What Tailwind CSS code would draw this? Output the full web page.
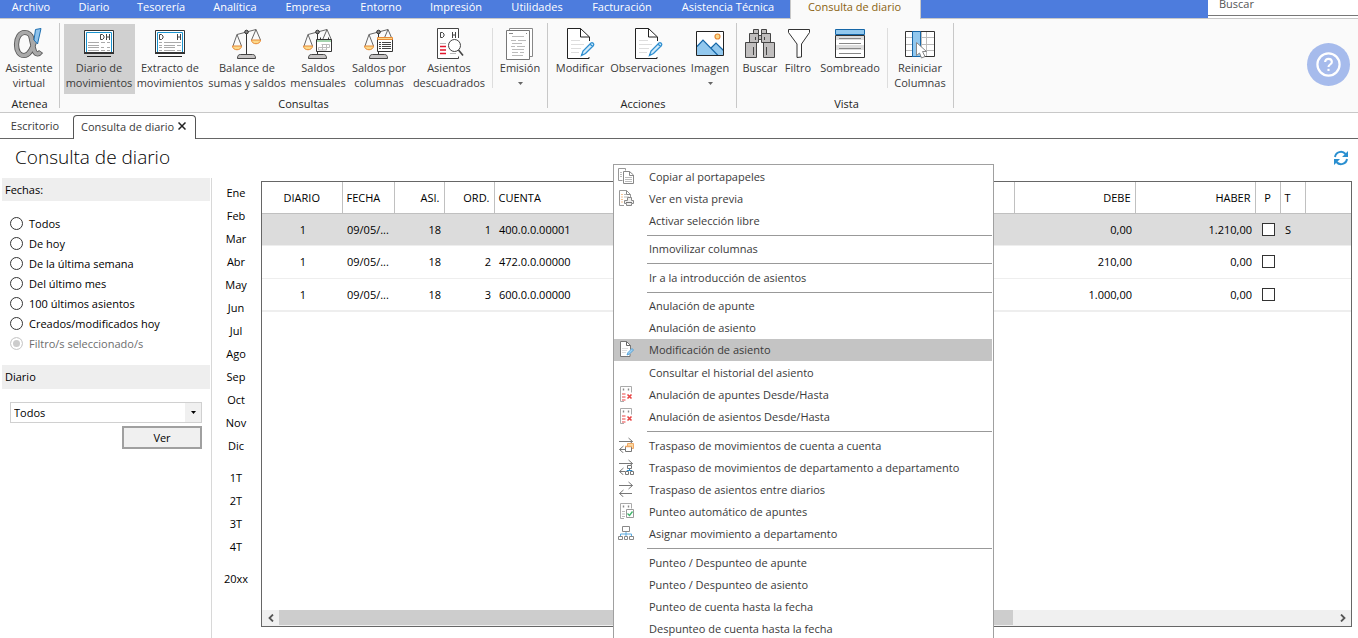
<!DOCTYPE html>
<html lang="es">
<head>
<meta charset="utf-8">
<title>Consulta de diario</title>
<script src="https://cdn.jsdelivr.net/npm/@tailwindcss/browser@4"></script>
</head>
<body class="relative flex h-screen flex-col overflow-hidden bg-white font-['Open_Sans','Noto_Sans',sans-serif] text-[11px] leading-[15px] text-[#3a3a3a]">

<svg class="hidden" aria-hidden="true">
  <symbol id="scale" viewBox="0 0 32 32">
    <path d="M15.500 5v22" stroke="#333"/>
    <path d="M6 6.500 25 1.500M6 6.500 2 18M6 6.500 10.500 18M25 1.500 20.500 12M25 1.500 29.500 12" stroke="#666" fill="none"/>
    <circle cx="15.500" cy="4" r="1.800" fill="#888" stroke="#333"/>
    <path d="M1.500 18h9c0 5-9 5-9 0z" fill="#fbd98b" stroke="#e88a35"/>
    <path d="M20.500 12h9c0 5-9 5-9 0z" fill="#fbd98b" stroke="#e88a35"/>
    <path d="M6.500 30.500c0-3 1-4 3-4h12c2 0 3 1 3 4z" fill="#c6c4c4" stroke="#444"/>
  </symbol>
  <symbol id="edit" viewBox="0 0 32 32">
    <path d="M25 29v1.500H3.500v-30h13l9 8.500v4" fill="#fff" stroke="#222"/>
    <path d="M16.500 .5v8.500h9" fill="none" stroke="#222"/>
    <path d="M7 12.500h9M7 16.500h13M7 20.500h10M7 24.500h8" stroke="#ddd"/>
    <path d="m17.500 27.500 1.500-4.500 8-8c1.500-1 3.500 1 2.500 2.500l-8 8zM26 16l2.500 2.500" fill="#d4ecfb" stroke="#2f8fd0" stroke-width="1.300"/>
  </symbol>
  <symbol id="arrows" viewBox="0 0 16 16">
    <path d="M1 4.500h13.500M10.500 1l4 3.500-4 3.500M14 12.500H1.500M5.500 9l-4 3.500 4 3.500" fill="none" stroke="#777"/>
  </symbol>
  <symbol id="delrows" viewBox="0 0 16 16">
    <path d="M6 15.500H2.500v-15h11v6" fill="#fff" stroke="#aaa"/>
    <path d="M5.500 2.500v2M10.500 2.500v2" stroke="#888" stroke-width="1.400"/>
    <path d="M4 8h3.500M4 11h3.500M4 14h3.500" stroke="#f5a0a0" stroke-width="2"/>
    <path d="m9.500 8.500 4 4M13.500 8.500l-4 4" stroke="#e84545" stroke-width="1.600"/>
  </symbol>
</svg>

<!-- Menu tabs -->
<nav class="flex h-[19px] shrink-0 border-b border-[#c8c8c8] bg-[#4d7cdd] leading-[14px] text-white">
  <a href="#" class="w-[62px] text-center">Archivo</a>
  <a href="#" class="w-16 text-center">Diario</a>
  <a href="#" class="w-[70px] text-center">Tesorería</a>
  <a href="#" class="w-[78px] text-center">Analítica</a>
  <a href="#" class="w-[68px] text-center">Empresa</a>
  <a href="#" class="w-[78px] text-center">Entorno</a>
  <a href="#" class="w-[72px] text-center">Impresión</a>
  <a href="#" class="w-[90px] text-center">Utilidades</a>
  <a href="#" class="w-20 text-center">Facturación</a>
  <a href="#" class="w-32 pl-1 text-center">Asistencia Técnica</a>
  <a href="#" class="-mb-px w-[131px] border-x border-[#c8c8c8] bg-[#fafafa] pr-0.5 text-center text-[#8a6210]">Consulta de diario</a>
  <div class="ml-auto w-[150px] bg-white">
    <input type="text" aria-label="Buscar" placeholder="Buscar" class="block h-4 w-full border-b border-[#777] pb-2 pl-[11px] leading-[8px] outline-none placeholder:text-[#555]">
  </div>
</nav>

<!-- Ribbon -->
<section class="flex h-[94px] shrink-0 border-b border-[#c8c8c8] bg-[#fafafa]" aria-label="Cinta de opciones">
  <div class="my-1 flex w-[60px] flex-col border-r border-[#c8c8c8] text-center">
    <button class="mt-px flex h-[70px] w-[58px] shrink-0 flex-col items-center pt-1">
      <svg class="h-8 w-8" viewBox="0 0 32 32">
        <path d="M19 11C18 6.500 15 4.500 11.500 4.500 7 4.500 3.500 9.500 3.500 16.500S6.500 27.500 11 27.500c5 0 8-5.500 11-15.500M17.500 7c1.500 5.500 2 10 3.500 15 1.300 4.500 4.500 5 7 1.500" fill="none" stroke="#555" stroke-width="5.200"/>
        <path d="M19 11C18 6.500 15 4.500 11.500 4.500 7 4.500 3.500 9.500 3.500 16.500S6.500 27.500 11 27.500c5 0 8-5.500 11-15.500M17.500 7c1.500 5.500 2 10 3.500 15 1.300 4.500 4.500 5 6.500 2" fill="none" stroke="#a9a9a9" stroke-width="3.500"/>
        <path d="M22.500 1.500 28 .5 24.500 16l-3.500-4z" fill="#8fc3ec" stroke="#1f6fb0"/>
      </svg>
      <span class="whitespace-nowrap">Asistente<br>virtual</span>
    </button>
    <span class="mt-1 leading-[12px] text-[#222]">Atenea</span>
  </div>

  <div class="my-1 flex w-[488px] flex-col border-r border-[#c8c8c8] pl-1 text-center">
    <div class="mt-px flex h-[70px] shrink-0">
      <button class="flex w-[71px] flex-col items-center bg-[#d0d0d0] pr-px pt-1">
        <svg class="h-8 w-8" viewBox="0 0 32 32">
          <path d="M1.500 2.500h29v22h-29z" fill="#fff" stroke="#333"/><path d="M1 25h30" stroke="#333" stroke-width="2"/>
          <path d="M3.500 24V4.500h25V24" fill="none" stroke="#1a93cf"/>
          <path d="M4 28.500h24" stroke="#222"/>
          <path d="M17.500 6.500h2l1.500 1.500v2l-1.500 1.500h-2zM23.500 6v6M26.500 6v6M23.500 9h3" fill="none" stroke="#444"/>
          <path d="M5 14.500h11M18 14.500h4M24 14.500h3M5 17.500h11M5 19.500h11M18 19.500h3M24 19.500h3M5 22.500h11M18 22.500h4M24 22.500h3" stroke="#aaa"/>
        </svg>
        <span class="whitespace-nowrap">Diario de<br>movimientos</span>
      </button>
      <button class="flex w-[71px] flex-col items-center pr-px pt-1">
        <svg class="h-8 w-8" viewBox="0 0 32 32">
          <path d="M1.500 2.500h29v22h-29z" fill="#fff" stroke="#333"/><path d="M1 25h30" stroke="#333" stroke-width="2"/>
          <path d="M3.500 24V4.500h25V24" fill="none" stroke="#1a93cf"/>
          <path d="M4 28.500h24" stroke="#222"/>
          <path d="M5.500 6.500h2L9 8v2l-1.500 1.500h-2zM23.500 6v6M26.500 6v6M23.500 9h3" fill="none" stroke="#444"/>
          <path d="M5 14.500h3M10 14.500h17M5 17.500h3M10 17.500h11M23 17.500h4M5 19.500h3M10 19.500h11M5 22.500h3M10 22.500h11M23 22.500h4" stroke="#aaa"/>
        </svg>
        <span class="whitespace-nowrap">Extracto de<br>movimientos</span>
      </button>
      <button class="flex w-[82px] flex-col items-center pt-1">
        <svg class="h-8 w-8"><use href="#scale"/></svg>
        <span class="whitespace-nowrap">Balance de<br>sumas y saldos</span>
      </button>
      <button class="flex w-[60px] flex-col items-center pt-1">
        <svg class="h-8 w-8" viewBox="0 0 32 32">
          <use href="#scale"/>
          <path d="M14.500 11.500h15v12h-15z" fill="#fff" stroke="#333"/><path d="M15 12h14v2H15z" fill="#a3d3ad"/>
          <path d="M18.500 9.500v2M26.500 9.500v2" stroke="#333"/>
          <path d="M16.500 19.500V22h8M20.500 16v6M24.500 16v6M19.500 16.500h8v3M16.500 19.500h11" stroke="#bbb" fill="none"/>
        </svg>
        <span class="whitespace-nowrap">Saldos<br>mensuales</span>
      </button>
      <button class="flex w-[62px] flex-col items-center pt-1">
        <svg class="h-8 w-8" viewBox="0 0 32 32">
          <use href="#scale"/>
          <path d="M14.500 10.500h15v13h-15z" fill="#fff" stroke="#333"/><path d="M14.500 9.500h15v2h-15z" fill="#fbd98b" stroke="#e88a35"/>
          <path d="M16 14.500h2M19 14.500h9M16 16.500h2M19 16.500h9M16 18.500h2M19 18.500h9M16 20.500h2M19 20.500h9" stroke="#444"/>
        </svg>
        <span class="whitespace-nowrap">Saldos por<br>columnas</span>
      </button>
      <button class="flex w-[78px] flex-col items-center pt-1">
        <svg class="h-8 w-8" viewBox="0 0 32 32">
          <path d="M25.500 10V.5h-21v30h21v-2" fill="#fff" stroke="#444"/>
          <path d="M7.500 4.500h2L11 6v2L9.500 9.500h-2zM19.500 4v6M22.500 4v6M19.500 7h3" fill="none" stroke="#444"/>
          <path d="M7 15.500h6M17 25.500h6" stroke="#bbb"/>
          <path d="M7 18.500h6M7 22h6M7 25.500h6" stroke="#e0152b" stroke-width="1.500"/>
          <circle cx="21.500" cy="17.500" r="6" fill="#fff" stroke="#444"/>
          <path d="m25.500 22 4.500 5.500" stroke="#444" stroke-width="1.600"/>
        </svg>
        <span class="whitespace-nowrap">Asientos<br>descuadrados</span>
      </button>
      <div class="ml-1 mt-1 h-[60px] w-px bg-[#ddd]"></div>
      <button class="flex flex-1 flex-col items-center pt-1">
        <svg class="h-8 w-8" viewBox="0 0 32 32">
          <path d="M5.500 2.500V.5h23v28H26" fill="#fff" stroke="#888"/>
          <path d="M2.500 2.500h23v29h-23z" fill="#fff" stroke="#777"/>
          <path d="M5 5.500h4M22 5.500h1" stroke="#888"/>
          <path d="M8 8.500h12M7 12.500h5M14 12.500h8M8 15.500h10M7 18.500h4M13 18.500h8M8 21.500h12M8 24.500h6M16 24.500h4M8 27.500h11" stroke="#bbb"/>
        </svg>
        <span class="whitespace-nowrap">Emisión</span>
        <svg class="mt-[7px] h-[3px] w-[5px]" viewBox="0 0 5 3"><path d="M0 0h5L2.500 3z" fill="#666"/></svg>
      </button>
    </div>
    <span class="mt-1 pr-1 leading-[12px] text-[#222]">Consultas</span>
  </div>

  <div class="my-1 flex w-[189px] flex-col border-r border-[#c8c8c8] pl-0.5 text-center">
    <div class="mt-px flex h-[70px] shrink-0">
      <button class="flex w-[60px] flex-col items-center pt-1"><svg class="h-8 w-8"><use href="#edit"/></svg><span>Modificar</span></button>
      <button class="flex w-[76px] flex-col items-center pt-1"><svg class="h-8 w-8"><use href="#edit"/></svg><span>Observaciones</span></button>
      <button class="flex w-12 flex-col items-center pt-1">
        <svg class="h-8 w-8" viewBox="0 0 32 32">
          <path d="M2.500 3.500h27v24h-27z" fill="#fff"/>
          <path d="M3 18.500 9 12l8 8 5-5 7.500 7.500v5H3z" fill="#92c8ee"/>
          <path d="M3 18.500 9 12l15 15.500M17 20l5-5 7.500 7.500" fill="none" stroke="#1667a8" stroke-width="1.200"/>
          <path d="M2.500 3.500h27v24h-27z" fill="none" stroke="#222"/>
          <circle cx="23.500" cy="8.500" r="2.500" fill="#fbd98b" stroke="#e88a35" stroke-width="1.200"/>
        </svg>
        <span>Imagen</span>
        <svg class="mt-[7px] h-[3px] w-[5px]" viewBox="0 0 5 3"><path d="M0 0h5L2.500 3z" fill="#666"/></svg>
      </button>
    </div>
    <span class="mt-1 leading-[12px] text-[#222]">Acciones</span>
  </div>

  <div class="my-1 flex w-[217px] flex-col border-r border-[#c8c8c8] pl-[3px] text-center">
    <div class="mt-px flex h-[70px] shrink-0">
      <button class="flex w-10 flex-col items-center pt-1">
        <svg class="h-8 w-8" viewBox="0 0 32 32">
          <path d="M9.500 1.500h5v4h-5zM17.500 1.500h5v4h-5zM5.500 5.500h9v9h-9zM17.500 5.500h9v9h-9zM1.500 14.500h11v15h-11zM19.500 14.500h11v15h-11zM14.500 7.500h3v4h-3z" fill="#c0bebe" stroke="#444"/>
          <path d="M11.500 9v3M20.500 9v3M9.500 19v8M22.500 19v8" stroke="#444"/>
        </svg>
        <span>Buscar</span>
      </button>
      <button class="flex w-[37px] flex-col items-center pr-px pt-1">
        <svg class="h-8 w-8" viewBox="0 0 32 32"><path d="M6.500 1.500h21v3l-8 11.500v13l-4.500 .5V16L6.500 4.500z" fill="#fff" stroke="#333"/></svg>
        <span>Filtro</span>
      </button>
      <button class="flex w-[67px] flex-col items-center pr-px pt-1">
        <svg class="h-8 w-8" viewBox="0 0 32 32">
          <path d="M1.500 7.500h29v22h-29z" fill="#fff" stroke="#333"/>
          <path d="M2 8h28v4H2zM2 17h28v5H2z" fill="#ddd"/>
          <path d="M1.500 1.500h29v5h-29z" fill="#92c8ee" stroke="#1667a8"/>
          <path d="M5 10.500h22M5 15.500h22M5 20.500h22M5 25.500h22" stroke="#888"/>
        </svg>
        <span>Sombreado</span>
      </button>
      <div class="ml-[3px] mt-1 h-[60px] w-px bg-[#ddd]"></div>
      <button class="ml-0.5 flex w-[60px] flex-col items-center pt-1">
        <svg class="h-8 w-8" viewBox="0 0 32 32">
          <path d="M1.500 3.500h29v25h-29z" fill="#fff" stroke="#333"/>
          <path d="M2 9.500h28M2 16.500h28M2 22.500h28M17.500 4v24M22.500 4v24" stroke="#bbb"/>
          <path d="M8.500 3.500h8v25h-8z" fill="#92c8ee" stroke="#1667a8"/>
          <path d="M12.500 14.500v13l3-2.500 2 5 3.500-1.500-2.500-5h4z" fill="#fff" stroke="#888"/>
        </svg>
        <span>Reiniciar<br>Columnas</span>
      </button>
    </div>
    <span class="mt-1 leading-[12px] text-[#222]">Vista</span>
  </div>

  <button aria-label="Ayuda" class="ml-auto mr-2 mt-6 flex size-[43px] items-center justify-center rounded-full bg-[#a6bbec]">
    <svg class="size-[27px]" viewBox="0 0 28 28" fill="none" stroke="#fff"><circle cx="14" cy="14" r="11.500" stroke-width="2.300"/><path d="M10.500 11.500c0-4.500 7-4.500 7 0 0 2.500-3.500 2.500-3.500 5" stroke-width="2.200"/><path d="M14 18.500v2.200" stroke-width="2.200"/></svg>
  </button>
</section>

<!-- Document tabs -->
<div class="flex h-[26px] shrink-0 items-end border-b border-[#666]">
  <button class="h-6 w-[73px] pb-0.5 pr-[3px] text-center">Escritorio</button>
  <div class="-mb-px flex h-6 w-[123px] items-center gap-1 rounded-t border border-b-0 border-[#555] bg-white pb-[3px] pl-[7px]">
    <button class="whitespace-nowrap">Consulta de diario</button>
    <button aria-label="Cerrar"><svg class="size-2" viewBox="0 0 8 8"><path d="m.5 .5 7 7M7.500 .5l-7 7" stroke="#222" stroke-width="1.500"/></svg></button>
  </div>
</div>

<header class="flex h-[39px] shrink-0 items-center justify-between pb-1 pl-[15px] pr-[9px]">
  <h1 class="text-[19px] font-light leading-6 text-black">Consulta de diario</h1>
  <button aria-label="Actualizar" class="pt-0.5"><svg class="size-4" viewBox="0 0 16 16" fill="none" stroke="#2a8fd0" stroke-width="2"><path d="M2 7a6 6 0 0 1 10.500-3M14 9a6 6 0 0 1-10.500 3"/><path d="M15 1v6H9zM1 15V9h6z" fill="#2a8fd0" stroke="none"/></svg></button>
</header>

<main class="flex min-h-0 flex-1 text-black">
  <aside class="w-[212px] shrink-0 border-r border-[#d8d8d8] pl-0.5 pr-px">
    <h2 class="h-[23px] bg-[#eee] pl-[3px] leading-[23px]">Fechas:</h2>
    <fieldset class="pl-2 pt-3">
      <label class="flex h-5 items-center gap-1.5"><input type="radio" name="fecha" class="size-[13px] appearance-none rounded-full border border-[#333]">Todos</label>
      <label class="flex h-5 items-center gap-1.5"><input type="radio" name="fecha" class="size-[13px] appearance-none rounded-full border border-[#333]">De hoy</label>
      <label class="flex h-5 items-center gap-1.5"><input type="radio" name="fecha" class="size-[13px] appearance-none rounded-full border border-[#333]">De la última semana</label>
      <label class="flex h-5 items-center gap-1.5"><input type="radio" name="fecha" class="size-[13px] appearance-none rounded-full border border-[#333]">Del último mes</label>
      <label class="flex h-5 items-center gap-1.5"><input type="radio" name="fecha" class="size-[13px] appearance-none rounded-full border border-[#333]">100 últimos asientos</label>
      <label class="flex h-5 items-center gap-1.5"><input type="radio" name="fecha" class="size-[13px] appearance-none rounded-full border border-[#333]">Creados/modificados hoy</label>
      <label class="flex h-5 items-center gap-1.5 text-[#6d6d6d]"><input type="radio" name="fecha" checked disabled class="size-[13px] appearance-none rounded-full border border-[#ccc] bg-[#ccc] shadow-[inset_0_0_0_2px_#fff]">Filtro/s seleccionado/s</label>
    </fieldset>
    <h2 class="mt-3 h-6 bg-[#eee] pl-[3px] leading-6"><label for="diario">Diario</label></h2>
    <div class="mx-2 mt-[13px] grid h-[21px] border border-[#d0d0d0]">
      <select id="diario" class="col-start-1 row-start-1 appearance-none pl-[3px] leading-[19px] outline-none"><option>Todos</option></select>
      <span class="pointer-events-none col-start-1 row-start-1 flex w-4 items-center justify-center justify-self-end bg-[#f0f0f0]"><svg class="h-[3px] w-[5px]" viewBox="0 0 5 3"><path d="M0 0h5L2.500 3z"/></svg></span>
    </div>
    <button class="ml-auto mr-2 mt-[3px] block h-[23px] w-20 border-2 border-[#a0a0a0] bg-[#f0f0f0]">Ver</button>
  </aside>

  <nav class="flex w-12 shrink-0 flex-col pt-[3px] text-center leading-[23px]" aria-label="Periodos">
    <button>Ene</button><button>Feb</button><button>Mar</button><button>Abr</button><button>May</button><button>Jun</button><button>Jul</button><button>Ago</button><button>Sep</button><button>Oct</button><button>Nov</button><button>Dic</button>
    <button class="mt-[9px]">1T</button><button>2T</button><button>3T</button><button>4T</button>
    <button class="mt-[9px]">20xx</button>
  </nav>

  <section class="mb-[11px] ml-px mr-[6px] mt-[3px] flex min-w-0 flex-1 flex-col border border-[#666]" aria-label="Apuntes">
    <table class="w-full table-fixed border-collapse">
      <colgroup><col class="w-20"><col class="w-[52px]"><col class="w-[50px]"><col class="w-[50px]"><col><col class="w-[121px]"><col class="w-[120px]"><col class="w-[25px]"><col class="w-[25px]"><col class="w-[46px]"></colgroup>
      <thead>
        <tr class="h-[31px] border-b border-[#c0c0c0] [&>th]:border-r [&>th]:border-[#c0c0c0] [&>th]:px-1 [&>th]:font-normal [&>th:last-child]:border-r-0">
          <th>DIARIO</th><th class="text-left">FECHA</th><th class="text-right">ASI.</th><th class="text-right">ORD.</th><th class="text-left">CUENTA</th><th class="text-right">DEBE</th><th class="text-right">HABER</th><th>P</th><th class="text-left">T</th><th></th>
        </tr>
      </thead>
      <tbody>
        <tr class="h-8 border-b border-[#eee] bg-[#dcdcdc] [&>td]:pl-[5px] [&>td]:pr-[3px]"><td class="text-center">1</td><td>09/05/...</td><td class="text-right">18</td><td class="text-right">1</td><td>400.0.0.00001</td><td class="text-right">0,00</td><td class="text-right">1.210,00</td><td><input type="checkbox" aria-label="Punteado" class="mx-auto block size-[13px] appearance-none border border-[#333] bg-white"></td><td>S</td><td></td></tr>
        <tr class="h-[33px] border-b border-[#eee] [&>td]:pl-[5px] [&>td]:pr-[3px]"><td class="text-center">1</td><td>09/05/...</td><td class="text-right">18</td><td class="text-right">2</td><td>472.0.0.00000</td><td class="text-right">210,00</td><td class="text-right">0,00</td><td><input type="checkbox" aria-label="Punteado" class="mx-auto block size-[13px] appearance-none border border-[#333] bg-white"></td><td></td><td></td></tr>
        <tr class="h-[33px] border-b-2 border-[#eee] [&>td]:pl-[5px] [&>td]:pr-[3px]"><td class="text-center">1</td><td>09/05/...</td><td class="text-right">18</td><td class="text-right">3</td><td>600.0.0.00000</td><td class="text-right">1.000,00</td><td class="text-right">0,00</td><td><input type="checkbox" aria-label="Punteado" class="mx-auto block size-[13px] appearance-none border border-[#333] bg-white"></td><td></td><td></td></tr>
      </tbody>
    </table>
    <div class="mt-auto flex h-4 bg-[#f0f0f0]">
      <button aria-label="Izquierda" class="flex w-[17px] items-center justify-center"><svg class="size-2" viewBox="0 0 8 8"><path d="M6 .5 2.500 4 6 7.500" fill="none" stroke="#555" stroke-width="1.800"/></svg></button>
      <div class="flex-1"><div class="h-[15px] w-[69.6%] bg-[#cdcdcd]"></div></div>
      <button aria-label="Derecha" class="flex w-[17px] items-center justify-center"><svg class="size-2" viewBox="0 0 8 8"><path d="M2 .5 5.500 4 2 7.500" fill="none" stroke="#555" stroke-width="1.800"/></svg></button>
    </div>
  </section>
</main>

<!-- Context menu -->
<div role="menu" class="absolute left-[613px] top-[164px] flex w-[381px] flex-col border border-[#a0a0a0] bg-white py-px">
  <button role="menuitem" class="flex h-[22px] items-center gap-[15px] pb-0.5 pl-1 text-left"><svg class="size-4" viewBox="0 0 16 16"><path d="M.5 .5h7v2M.5 .5v12h4" fill="none" stroke="#999"/><path d="M5.500 3.500h6l4 3.500v8.500h-10z" fill="#fff" stroke="#888"/><path d="M11.500 3.500v4h4" fill="none" stroke="#888"/><path d="M7 9.500h7M7 11.500h7M7 13.500h7M2 4.500h2M2 6.500h2M2 8.500h2" stroke="#bbb"/></svg>Copiar al portapapeles</button>
  <button role="menuitem" class="flex h-[22px] items-center gap-[15px] pb-0.5 pl-1 text-left"><svg class="size-4" viewBox="0 0 16 16"><path d="M6 15.500H1.500V.5h7l4 4V7" fill="#fff" stroke="#999"/><path d="M8.500 .5v4h4" fill="none" stroke="#888"/><path d="M3 4.500h2M3 7h2M3 9.500h2M3 12h2" stroke="#f5c090"/><path d="M6 7h5M6 4.500h2" stroke="#bbb"/><path d="M9.500 7.500h4v3h2v3h-2v2h-5v-2h-2v-3h3z" fill="#eee" stroke="#888"/><path d="M8 12.500h6" stroke="#777"/></svg>Ver en vista previa</button>
  <button role="menuitem" class="flex h-[22px] items-center pb-0.5 pl-[35px] text-left">Activar selección libre</button>
  <div role="separator" class="ml-[33px] mr-px pb-0.5 pt-[3px]"><div class="h-px bg-[#999]"></div></div>
  <button role="menuitem" class="flex h-[22px] items-center pb-0.5 pl-[35px] text-left">Inmovilizar columnas</button>
  <div role="separator" class="ml-[33px] mr-px py-[3px]"><div class="h-px bg-[#999]"></div></div>
  <button role="menuitem" class="flex h-[22px] items-center pb-0.5 pl-[35px] text-left">Ir a la introducción de asientos</button>
  <div role="separator" class="ml-[33px] mr-px pb-0.5 pt-[3px]"><div class="h-px bg-[#999]"></div></div>
  <button role="menuitem" class="flex h-[22px] items-center pb-0.5 pl-[35px] text-left">Anulación de apunte</button>
  <button role="menuitem" class="flex h-[22px] items-center pb-0.5 pl-[35px] text-left">Anulación de asiento</button>
  <button role="menuitem" class="mr-px flex h-[22px] items-center gap-[15px] bg-[#c4c4c4] pb-0.5 pl-1 text-left"><svg class="size-4" viewBox="0 0 16 16"><path d="M12 13v2.500H2.500V.5h6l4 4v4" fill="#fff" stroke="#777"/><path d="M8.500 .5v4h4" fill="none" stroke="#666"/><path d="M4 7.500h6M4 9.500h5M4 11.500h4" stroke="#ddd"/><path d="m9 14 1-2.500 4-4 1.500 1.500-4 4z" fill="#9fd0f0" stroke="#3f97d5" stroke-width=".8"/></svg>Modificación de asiento</button>
  <button role="menuitem" class="flex h-[22px] items-center pl-[35px] text-left">Consultar el historial del asiento</button>
  <button role="menuitem" class="flex h-[22px] items-center gap-[15px] pl-1 text-left"><svg class="size-4"><use href="#delrows"/></svg>Anulación de apuntes Desde/Hasta</button>
  <button role="menuitem" class="flex h-[22px] items-center gap-[15px] pl-1 text-left"><svg class="size-4"><use href="#delrows"/></svg>Anulación de asientos Desde/Hasta</button>
  <div role="separator" class="ml-[33px] mr-px pb-0.5 pt-1"><div class="h-px bg-[#999]"></div></div>
  <button role="menuitem" class="flex h-[22px] items-center gap-[15px] pl-1 text-left"><svg class="size-4" viewBox="0 0 16 16"><use href="#arrows"/><path d="M9.500 6.500h6v5h-6z" fill="#fbd9a0" stroke="#efa868"/><path d="M7.500 9.500h6v5h-6z" fill="#fff" stroke="#777"/><path d="M7 9.500h7" stroke="#efa868" stroke-width="1.500"/></svg>Traspaso de movimientos de cuenta a cuenta</button>
  <button role="menuitem" class="flex h-[22px] items-center gap-[15px] pl-1 text-left"><svg class="size-4" viewBox="0 0 16 16"><use href="#arrows"/><path d="M7 6h9v10H7z" fill="#fff"/><path d="M9.500 6.500h4v3h-4zM7.500 12.500h3v3h-3zM12.500 12.500h3v3h-3z" fill="#fff" stroke="#777"/><path d="M11.500 9.500v2M9 12v-.5h5v.5" fill="none" stroke="#2a8fd0"/></svg>Traspaso de movimientos de departamento a departamento</button>
  <button role="menuitem" class="flex h-[22px] items-center gap-[15px] pl-1 text-left"><svg class="size-4"><use href="#arrows"/></svg>Traspaso de asientos entre diarios</button>
  <button role="menuitem" class="flex h-[22px] items-center gap-[15px] pl-1 text-left"><svg class="size-4" viewBox="0 0 16 16"><path d="M6 15.500H2.500V.5h11v5" fill="#fff" stroke="#aaa"/><path d="M5.500 2.500v2M10.500 2.500v2" stroke="#888" stroke-width="1.400"/><path d="M4 8.500h3M4 11h3M4 13.500h3" stroke="#bbb"/><path d="M8.500 6.500h7v8h-7z" fill="#fff" stroke="#999"/><path d="m9.500 10.500 2 2 3-4" fill="none" stroke="#3fb56a" stroke-width="1.300"/></svg>Punteo automático de apuntes</button>
  <button role="menuitem" class="flex h-[22px] items-center gap-[15px] pl-1 text-left"><svg class="size-4" viewBox="0 0 16 16"><path d="M4.500 1.500h7v5h-7zM.5 11.500h4v3h-4zM6.500 11.500h3v3h-3zM11.500 11.500h4v3h-4z" fill="#fff" stroke="#888"/><path d="M8 7v4M2.500 11V9h11v2" fill="none" stroke="#5aaae0"/></svg>Asignar movimiento a departamento</button>
  <div role="separator" class="ml-[33px] mr-px pb-0.5 pt-1"><div class="h-px bg-[#999]"></div></div>
  <button role="menuitem" class="flex h-[22px] items-center pl-[35px] text-left">Punteo / Despunteo de apunte</button>
  <button role="menuitem" class="flex h-[22px] items-center pl-[35px] text-left">Punteo / Despunteo de asiento</button>
  <button role="menuitem" class="flex h-[22px] items-center pl-[35px] text-left">Punteo de cuenta hasta la fecha</button>
  <button role="menuitem" class="flex h-[22px] items-center pl-[35px] text-left">Despunteo de cuenta hasta la fecha</button>
</div>
</body>
</html>
